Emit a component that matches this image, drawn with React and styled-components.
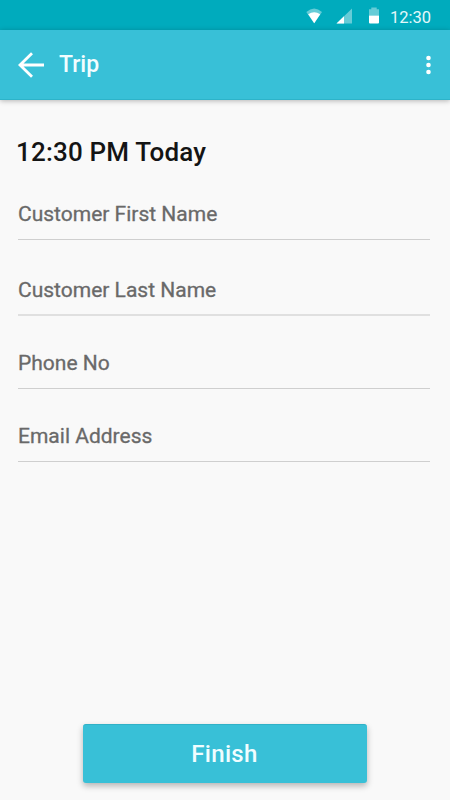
import React from "react";
import styled, { createGlobalStyle } from "styled-components";

const GlobalStyle = createGlobalStyle`
  * {
    box-sizing: border-box;
  }

  body {
    margin: 0;
    background-color: #f9f9f9;
    font-family: Roboto, "Liberation Sans", sans-serif;
  }
`;

const Screen = styled.div`
  display: flex;
  flex-direction: column;
  width: 450px;
  height: 800px;
  overflow: hidden;
  background-color: #f9f9f9;
`;

const StatusBar = styled.div`
  display: flex;
  flex-shrink: 0;
  justify-content: flex-end;
  align-items: center;
  height: 30px;
  padding: 4px 18px 0 0;
  background-color: #00abbd;
`;

const StatusIcons = styled.svg`
  display: block;
  width: 74px;
  height: 18px;
  margin-right: 10.5px;
  overflow: visible;
`;

const Clock = styled.span`
  width: 42px;
  margin-top: 1px;
  color: #e2f8fa;
  font-size: 16.5px;
  line-height: 20px;
  white-space: nowrap;
`;

const AppBar = styled.header`
  display: flex;
  flex-shrink: 0;
  align-items: center;
  height: 70px;
  padding: 0 18px;
  background-color: #38c0d7;
  border-bottom: 1px solid #2db3c9;
  box-shadow: 0 1px 5px rgba(0, 0, 0, 0.28);
`;

const IconButton = styled.button`
  display: flex;
  padding: 0;
  border: none;
  background: none;
  color: white;
  cursor: pointer;
`;

const Title = styled.h1`
  flex: 1;
  margin: 0 0 0 15px;
  color: #f2fdff;
  font-size: 23px;
  font-weight: 500;
  line-height: 28px;
`;

const Form = styled.form`
  display: flex;
  flex: 1;
  flex-direction: column;
  padding: 36px 20px 17px 18px;
`;

const Heading = styled.h2`
  margin: 0 0 0 -2px;
  color: #141414;
  font-size: 26px;
  font-weight: 500;
  letter-spacing: 0.18px;
  line-height: 32px;
`;

const Field = styled.label`
  display: flex;
  align-items: flex-end;
  height: ${(props) => props.$height || 73}px;
  padding-bottom: ${(props) => (props.$soft ? 11 : 12)}px;
  border-bottom: ${(props) =>
    props.$soft ? "2px solid #e0e0e0" : "1px solid #cfcfcf"};
  color: #696969;
  font-size: 21px;
  line-height: 25px;
  -webkit-text-stroke: 0.3px #696969;
`;

const FinishButton = styled.button`
  align-self: center;
  width: 284px;
  height: 59px;
  margin: auto 0 0 1px;
  border: none;
  border-top: 1px solid #30b1c7;
  border-radius: 3px;
  background-color: #38c0d7;
  box-shadow: 0 3px 6px rgba(0, 0, 0, 0.28);
  color: #f0fdff;
  font-family: inherit;
  font-size: 24px;
  font-weight: 500;
  letter-spacing: 0.3px;
  cursor: pointer;
`;

const fields = [
  { name: "Customer First Name", height: 72 },
  { name: "Customer Last Name", height: 76, soft: true },
  { name: "Phone No" },
  { name: "Email Address" },
];

const App = () => {
  return (
    <>
      <GlobalStyle />
      <Screen>
        <StatusBar>
          {/* wifi, signal and battery */}
          <StatusIcons viewBox="0 0 74 18" fill="white">
            <path d="M.3 4Q8.2-3 16 4L8.2 15.2Z" opacity="0.4" />
            <path d="M2.2 6.3Q8.2 2.2 14.2 6.3L8.2 15.2Z" />
            <path d="M46 .5V15.5H30.5Z" opacity="0.4" />
            <path d="M38 8.2V15.5H30.5Z" />
            <path
              d="M63 1.2H65.3V-.5H70.7V1.2H73V7.5H63Z"
              opacity="0.4"
            />
            <path d="M63 7.5H73V14.5Q73 15.5 72 15.5H64Q63 15.5 63 14.5Z" />
          </StatusIcons>
          <Clock>12:30</Clock>
        </StatusBar>

        <AppBar>
          <IconButton type="button" aria-label="Back">
            <svg width="26" height="26" viewBox="0 0 26 26" fill="none">
              <path
                d="M14 1.3L2 13L14 24.7M2 13H26"
                stroke="currentColor"
                strokeWidth="2.8"
              />
            </svg>
          </IconButton>
          <Title>Trip</Title>
          <IconButton type="button" aria-label="More">
            <svg width="8" height="20" viewBox="0 0 8 20" fill="currentColor">
              <circle cx="4.5" cy="3" r="2.3" />
              <circle cx="4.5" cy="10" r="2.3" />
              <circle cx="4.5" cy="17" r="2.3" />
            </svg>
          </IconButton>
        </AppBar>

        <Form onSubmit={(e) => e.preventDefault()}>
          <Heading>12:30 PM Today</Heading>
          {fields.map((field) => (
            <Field key={field.name} $height={field.height} $soft={field.soft}>
              {field.name}
            </Field>
          ))}
          <FinishButton type="submit">Finish</FinishButton>
        </Form>
      </Screen>
    </>
  );
};

export default App;
